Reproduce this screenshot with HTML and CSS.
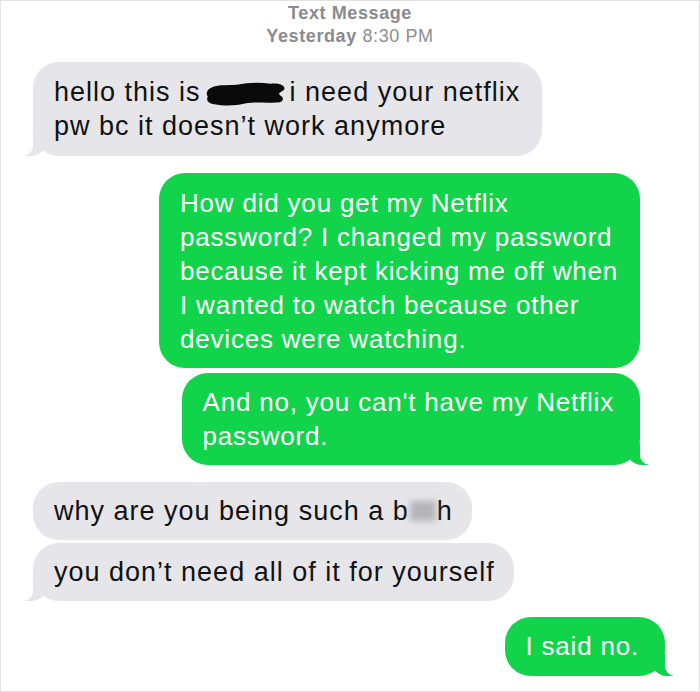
FILE: index.html
```html
<!DOCTYPE html>
<html lang="en">
<head>
  <meta charset="UTF-8" />
  <meta name="viewport" content="width=device-width, initial-scale=1.0"/>
  <title>Text Message</title>
  <link rel="stylesheet" href="styles.css">
</head>
<body>
  <div class="thread">
    <div class="thread-header">
      <div class="service">Text Message</div>
      <div class="stamp"><b>Yesterday</b> 8:30 PM</div>
    </div>

    <div class="bubble them tail">
      hello this is <span class="scribble"><svg viewBox="0 0 90 28" xmlns="http://www.w3.org/2000/svg">
        <path d="M4 9 C10 3 24 5 34 4 C46 2 58 1 70 3 C78 2 86 4 85 9 C83 12 78 12 80 15 C86 18 84 24 76 23 C64 24 54 22 44 24 C32 27 20 27 10 25 C3 24 1 20 3 17 C1 14 2 11 4 9 Z" fill="#0a0a0a"/>
      </svg></span> i need your netflix<br>pw bc it doesn’t work anymore
    </div>

    <div class="bubble me wide">
      How did you get my Netflix<br>password? I changed my password<br>because it kept kicking me off when<br>I wanted to watch because other<br>devices were watching.
    </div>
    <div class="bubble me second tail">
      And no, you can't have my Netflix<br>password.
    </div>

    <div class="bubble them group">
      why are you being such a b<span class="blurred"></span>h
    </div>
    <div class="bubble them tail">
      you don’t need all of it for yourself
    </div>

    <div class="bubble me last tail">
      I said no.
    </div>
  </div>
</body>
</html>
```

FILE: styles.css
```css
body {
  margin: 0;
  padding: 0;
  background-color: #fff;
  font-family: 'Liberation Sans', Arial, sans-serif;
}

.thread {
  width: 700px;
  height: 692px;
  box-sizing: border-box;
  border: 1px solid #e2e2e2;
  display: flex;
  flex-direction: column;
  align-items: flex-start;
  overflow: hidden;
}

.thread-header {
  align-self: stretch;
  text-align: center;
  color: #8e8e93;
  font-size: 18px;
  letter-spacing: 0.6px;
  line-height: 23px;
  padding-top: 1px;
  margin-bottom: 14px;
}

.thread-header .service,
.thread-header b {
  font-weight: bold;
  color: #8a8a8f;
}

.bubble {
  position: relative;
  font-size: 27px;
  letter-spacing: 1px;
  line-height: 34px;
  padding: 13px 22px 13px 21px;
  border-radius: 26px;
  white-space: nowrap;
}

.bubble.them {
  background-color: #e5e5ea;
  color: #111;
  margin-left: 32px;
}

.bubble.me {
  background-color: #12d44b;
  color: #fff;
  font-size: 26px;
  letter-spacing: 0.8px;
  align-self: flex-end;
}

.bubble.wide {
  margin-top: 17px;
  margin-right: 59px;
  padding: 13px 22px 12px 21px;
}

.bubble.second {
  margin-top: 5px;
  margin-right: 59px;
  padding: 12px 26px 12px 21px;
}

.bubble.group {
  margin-top: 17px;
  padding-right: 23px;
}

.bubble.them + .bubble.them {
  margin-top: 3px;
}

.bubble.group,
.bubble.group + .bubble.them {
  padding-top: 12px;
  padding-bottom: 12px;
  padding-right: 19px;
}

.bubble.last {
  margin-top: 16px;
  margin-right: 34px;
  padding: 12px 26px 13px 20px;
}

/* little curled tails under the last bubble of a group */
.bubble.tail::before,
.bubble.tail::after {
  content: "";
  position: absolute;
  bottom: 0;
  height: 22px;
}

.bubble.them.tail::before {
  left: -8px;
  width: 22px;
  background-color: #e5e5ea;
  border-bottom-right-radius: 16px;
}

.bubble.them.tail::after {
  left: -10px;
  width: 10px;
  background-color: #fff;
  border-bottom-right-radius: 10px;
}

.bubble.me.tail::before {
  right: -8px;
  width: 22px;
  background-color: #12d44b;
  border-bottom-left-radius: 16px;
}

.bubble.me.tail::after {
  right: -10px;
  width: 10px;
  background-color: #fff;
  border-bottom-left-radius: 10px;
}

.scribble {
  display: inline-block;
  width: 84px;
  height: 30px;
  vertical-align: -8px;
  margin-left: -4px;
  margin-right: -8px;
}

.scribble svg {
  width: 100%;
  height: 100%;
  display: block;
}

.blurred {
  display: inline-block;
  width: 26px;
  height: 20px;
  margin: 0 1px;
  vertical-align: -1px;
  background-color: #b4b4b8;
  filter: blur(3px);
}
```
